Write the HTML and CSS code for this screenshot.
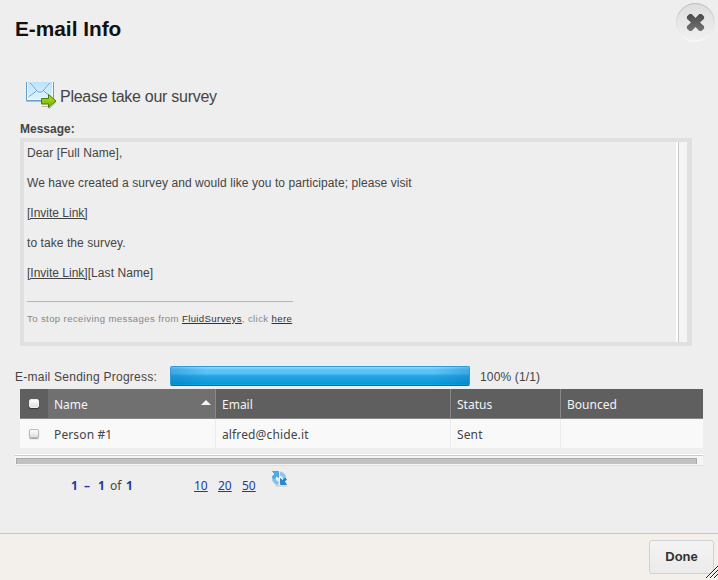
FILE: index.html
```html
<!DOCTYPE html>
<html lang="en">
<head>
<meta charset="utf-8">
<title>E-mail Info</title>
<link rel="stylesheet" href="styles.css">
</head>
<body>
<div class="dialog">
  <header class="head">
    <h1>E-mail Info</h1>
    <button class="close" aria-label="Close">
      <svg width="40" height="40" viewBox="0 0 40 40">
        <defs>
          <linearGradient id="ring" x1="0" y1="0" x2="0" y2="1"><stop offset="0" stop-color="#c3c3c3"/><stop offset="1" stop-color="#fafafa"/></linearGradient>
          <linearGradient id="disc" x1="0" y1="0" x2="0" y2="1"><stop offset="0" stop-color="#dedede"/><stop offset="1" stop-color="#f1f1f1"/></linearGradient>
          <linearGradient id="cross" x1="0" y1="0" x2="0" y2="1"><stop offset="0" stop-color="#4a4a4a"/><stop offset="1" stop-color="#747474"/></linearGradient>
        </defs>
        <circle cx="20.400" cy="20.400" r="18.800" fill="url(#disc)" stroke="url(#ring)" stroke-width="1.300"/>
        <path d="M-6 -8.600h2.200L0 -4.600l3.800-4H6L8.600 -6v2.200L4.500 0l4.100 3.800V6L6 8.600H3.800L0 4.600l-3.800 4H-6L-8.600 6V3.800L-4.500 0l-4.100-3.800V-6z" transform="translate(20.500 20.500)" fill="url(#cross)"/>
      </svg>
    </button>
  </header>
  <main class="content">
    <div class="subject">
      <svg width="32" height="29" viewBox="0 0 32 29">
        <defs>
          <linearGradient id="env" x1="0" y1="0" x2="0" y2="1"><stop offset="0" stop-color="#b9e2fc"/><stop offset="1" stop-color="#e2f4ff"/></linearGradient>
          <linearGradient id="arrow" x1="0" y1="0" x2="0" y2="1"><stop offset="0" stop-color="#b8e51b"/><stop offset="1" stop-color="#72ad00"/></linearGradient>
        </defs>
        <path d="M1 20.500h28" stroke="#b8bdc0"/>
        <path d="M1.500 1v18.500h27V1z" fill="url(#env)"/>
        <path d="M2.500 1v17.500h25V1" fill="none" stroke="#f4fbff"/>
        <path d="M1.500 1v18.500h27V1" fill="none" stroke="#689fc8"/>
        <path d="M5 3l7.500 8.500q2.500 2 5 0L25 3M3.500 17l8-6.500M26.500 17l-8-6.500" fill="none" stroke="#fff"/>
        <path d="M5 2l7.500 8.500q2.500 2 5 0L25 2M3.500 16l8-6M26.500 16l-8-6" fill="none" stroke="#69a2cc"/>
        <path d="M17 25.500h7.500v2l6.500-6" fill="none" stroke="#bbb"/>
        <path d="M16.500 17.500h7v-4l7.500 6.500-7.500 6.500v-3.500h-7z" fill="url(#arrow)" stroke="#4b7d0b"/>
      </svg>
      <span class="subject-text">Please take our survey</span>
    </div>
    <div class="label">Message:</div>
    <section class="message">
      <div class="body">
        <p>Dear [Full Name],</p>
        <p>We have created a survey and would like you to participate; please visit</p>
        <p><a class="invite">[Invite Link]</a></p>
        <p>to take the survey.</p>
        <p><a class="invite">[Invite Link]</a>[Last Name]</p>
        <div class="unsub">To stop receiving messages from <a>FluidSurveys</a>, click <a>here</a></div>
      </div>
      <div class="vscroll"></div>
    </section>
    <div class="progress-row">
      <span class="progress-label">E-mail Sending Progress:</span>
      <div class="bar"></div>
      <span class="progress-value">100% (1/1)</span>
    </div>
    <div class="grid">
      <div class="row header">
        <div class="cell check"><i class="box"></i></div>
        <div class="cell sorted"><span>Name</span><i class="sort"></i></div>
        <div class="cell"><span>Email</span></div>
        <div class="cell"><span>Status</span></div>
        <div class="cell"><span>Bounced</span></div>
      </div>
      <div class="row data">
        <div class="cell check"><i class="box"></i></div>
        <div class="cell first"><span>Person #1</span></div>
        <div class="cell"><span>alfred@chide.it</span></div>
        <div class="cell"><span>Sent</span></div>
        <div class="cell"></div>
      </div>
    </div>
    <div class="hscroll"><div class="thumb"></div></div>
    <div class="pager">
      <div class="range"><b>1</b><b class="dash">–</b><b class="to">1</b><span>of</span><b>1</b></div>
      <div class="sizes"><a>10</a><a>20</a><a>50</a></div>
      <svg class="refresh" width="16" height="16" viewBox="0 0 16 16">
        <path d="M3 15h12" stroke="#c7c7c7"/>
        <path d="M6.500 12.500A5.300 5.300 0 0 1 2.500 5" fill="none" stroke="#86c1ec" stroke-width="3.800"/>
        <path d="M8 2.500A5.400 5.400 0 0 1 12.500 9" fill="none" stroke="#8fc5ec" stroke-width="3.800"/>
        <path d="M.5.500h6v6L4.500 5 2 7.500.5 6 3 3z" fill="#49b1ed" stroke="#338ccc" stroke-width=".7"/>
        <path d="M14.500 13.500h-6v-6l2 2L13 7l1.500 1.500-2 2z" fill="#238bd5" stroke="#1573b9" stroke-width=".7"/>
      </svg>
    </div>
  </main>
  <footer class="foot">
    <button class="done">Done</button>
    <svg class="grip" width="12" height="12" viewBox="0 0 12 12"><path d="M1 12L13 0M5 12l8-8M9 12l4-4" stroke="#fff"/><path d="M0 12L12 0M4 12l8-8M8 12l4-4" stroke="#222"/></svg>
  </footer>
</div>
</body>
</html>
```
FILE: styles.css
```css
* { box-sizing: border-box; }
body {
  margin: 0;
  background: #eee;
  color: #444;
  font: 12px/15px "Liberation Sans", Arial, sans-serif;
  overflow: hidden;
}
.dialog { display: flex; flex-direction: column; height: 580px; }
.head { display: flex; justify-content: space-between; height: 81px; padding: 2px 3px 0 15px; }
h1 { margin: 15px 0 0; font-size: 20.8px; line-height: 24px; color: #111; }
.close { width: 40px; height: 40px; padding: 0; border: 0; background: none; }
.close svg { display: block; }
.content { flex: 1; }
.subject { display: flex; height: 41px; padding-left: 24.5px; }
.subject-text { margin: 6px 0 0 3.5px; font-size: 16px; line-height: 20px; letter-spacing: -.27px; }
.label { height: 16px; padding-left: 20px; font-weight: bold; }
.message {
  display: flex;
  width: 672px;
  height: 208px;
  margin-left: 20px;
  border: 4px solid #e0e0e0;
  border-right-width: 5px;
}
.body { flex: 1; padding: 4px 3px 0; letter-spacing: .075px; }
.body p { margin: 0 0 15px; }
a { text-decoration: underline; }
.invite { letter-spacing: 0; }
.unsub {
  width: 266px;
  margin-top: 20px;
  padding-top: 9px;
  border-top: 1px solid #b4b4b4;
  color: #888;
  font-size: 9.6px;
  letter-spacing: .375px;
  white-space: nowrap;
}
.unsub a { color: #333; }
.vscroll { width: 11px; border-left: 2px solid #fff; background: #f4f4f4; box-shadow: inset 1px 0 #c8c8c8; }
.progress-row { display: flex; height: 43px; padding: 20px 0 0 15px; }
.progress-label { width: 155px; padding-top: 4px; letter-spacing: .25px; }
.bar {
  width: 300px;
  height: 20px;
  border: 1px solid #2b9ddd;
  border-bottom: 1px solid #086caa;
  border-radius: 2px;
  background: linear-gradient(90deg, #006db650, #0080c000 12%, #0080c000 88%, #006db650), linear-gradient(#9bd5f5 0 1px, #5cc6f8 2px, #54c3f8 35%, #28a3e3 50%, #079bd7 94%, #10afe8);
}
.progress-value { margin-left: 10px; padding-top: 4px; letter-spacing: .15px; }
.grid { width: 683px; margin-left: 20px; font-family: "Noto Sans", "Open Sans", sans-serif; }
.row { display: grid; grid-template-columns: 28px 167px 235px 110px 143px; }
.cell { display: flex; align-items: center; padding: 2px 0 0 6px; border-left: 1px solid #ececec; }
.cell.check { justify-content: center; padding: 0; border: 0; }
.cell.first, .cell.sorted { border-left: 0; }
.header { height: 30px; background: #5f5f5f; border-bottom: 1px solid #888; color: #f4f4f4; }
.header .cell { border-color: #888; }
.header .sorted { background: #707070; }
.data { height: 29px; background: #f9f9f9; letter-spacing: .13px; }
.box { width: 10px; height: 9px; border: 1px solid #bbb; border-radius: 2px; background: linear-gradient(#fff, #ddd); box-shadow: 0 1px 1px #999; }
.header .box { border-color: #eee; box-shadow: 0 1px 1px #333; }
.sort { margin: -5px 4px 0 auto; border: 5px solid transparent; border-top: 0; border-bottom-color: #f4f4f4; }
.hscroll {
  width: 688px;
  height: 12px;
  margin: 6px 0 0 15px;
  padding: 3px 6px 1px 1px;
  border-top: 1px solid #fff;
  border-bottom: 1px solid #dfdfdf;
  background: linear-gradient(#ccc 0 1px, #f5f5f5 1px);
}
.thumb { height: 6px; background: #c1c1c1; border: 1px solid #a9a9a9; border-width: 1px 1px 0; }
.pager { display: flex; height: 67px; padding-left: 71px; font-family: "Noto Sans", "Open Sans", sans-serif; }
.range { display: flex; width: 123px; padding-top: 12px; }
.range b { width: 13px; color: #1d3a9f; }
.range .dash { width: 14px; }
.range .to { width: 12px; }
.range span { width: 16px; }
.sizes { display: flex; gap: 10px; padding-top: 12px; color: #1d3a9f; }
.sizes a { width: 14px; }
.refresh { margin: 5px 0 0 16px; }
.foot {
  position: relative;
  display: flex;
  justify-content: flex-end;
  height: 47px;
  padding: 6px 4px 0 0;
  border-top: 1px solid #c6c6c6;
  background: #f3f0eb;
}
.done {
  width: 65px;
  height: 34px;
  padding: 0;
  border: 1px solid #d1d1d1;
  border-radius: 3px;
  background: linear-gradient(#f4f4f4, #ebebeb);
  color: #333;
  font: bold 13px/30px "Liberation Sans", Arial, sans-serif;
}
.grip { position: absolute; right: 0; bottom: 2px; }
```
